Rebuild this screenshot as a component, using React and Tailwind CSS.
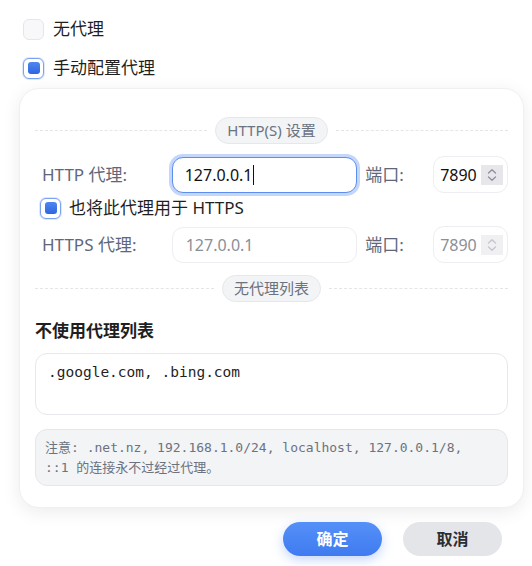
import React from 'react';

const Check = ({ checked }) => (
    <div className={`w-[21px] h-[21px] rounded-[6px] border flex items-center justify-center shrink-0 ${checked ? 'border-[#7aa2f2] bg-white shadow-[0_0_0_1px_rgba(122,162,242,0.25)]' : 'border-[#e4e6ea] bg-[#f8f8fa]'}`}>
        {checked && <div className="w-[12px] h-[12px] rounded-[3px] bg-gradient-to-b from-[#4d86f2] to-[#2f66df]"></div>}
    </div>
);

const Spinner = ({ disabled }) => (
    <div className={`w-[22px] h-[20px] flex flex-col items-center justify-center ${disabled ? 'bg-[#f0f0f3]' : 'bg-[#e6e6eb]'}`}>
        <svg width="10" height="14" viewBox="0 0 10 14" fill="none" stroke={disabled ? '#c4c6cc' : '#8e9199'} strokeWidth="1.3" strokeLinecap="round" strokeLinejoin="round">
            <path d="M1.5 5 L5 1.8 L8.5 5" />
            <path d="M1.5 9 L5 12.2 L8.5 9" />
        </svg>
    </div>
);

const Divider = ({ label }) => (
    <div className="flex items-center gap-[8px]">
        <div className="flex-1 border-t border-dashed border-[#e3e5e9]"></div>
        <div className="h-[27px] px-[11px] rounded-full bg-[#f3f4f6] border border-[#e5e7eb] flex items-center text-[15px] text-[#6b7280]">{label}</div>
        <div className="flex-1 border-t border-dashed border-[#e3e5e9]"></div>
    </div>
);

const ProxyRow = ({ label, disabled }) => (
    <div className="flex items-center">
        <span className="w-[137px] pl-[7px] text-[17px] text-[#60677a]">{label}</span>
        {disabled ? (
            <div className="w-[186px] h-[36px] rounded-[11px] border border-[#eceef1] bg-white flex items-center pl-[13px] text-[16px] text-[#8b8f97]">127.0.0.1</div>
        ) : (
            <div className="w-[186px] h-[36px] rounded-[11px] border-[1.5px] border-[#5c8ef2] shadow-[0_0_0_3px_#c5d6fb] bg-white flex items-center pl-[12px] text-[16px] text-[#111]">
                127.0.0.1<span className="w-px h-[20px] bg-[#111] ml-[1px]"></span>
            </div>
        )}
        <span className="ml-[8px] w-[68px] text-[17px] text-[#60677a]">端口:</span>
        <div className="w-[75px] h-[37px] rounded-[11px] border border-[#eceef1] bg-white flex items-center pl-[6px] gap-[4px]">
            <span className={`text-[16px] ${disabled ? 'text-[#8b8f97]' : 'text-[#111]'}`}>7890</span>
            <Spinner disabled={disabled} />
        </div>
    </div>
);

export default function App() {
    return (
        <div className="w-[532px] h-[566px] bg-white overflow-hidden font-['Noto_Sans','Noto_Sans_CJK_SC',sans-serif]">
            <div className="pl-[23px] pt-[18px] flex flex-col gap-[17px]">
                <div className="flex items-center gap-[9px]">
                    <Check />
                    <span className="text-[17px] text-[#1f1f1f] leading-[22px]">无代理</span>
                </div>
                <div className="flex items-center gap-[9px]">
                    <Check checked />
                    <span className="text-[17px] text-[#1f1f1f] leading-[22px]">手动配置代理</span>
                </div>
            </div>

            <div className="ml-[19px] mt-[9px] w-[505px] h-[420px] rounded-[20px] bg-white border border-[#eff0f2] shadow-[0_4px_18px_rgba(0,0,0,0.08)] px-[15px] pt-[28px]">
                <Divider label="HTTP(S) 设置" />
                <div className="mt-[12px]">
                    <ProxyRow label="HTTP 代理:" />
                </div>
                <div className="mt-[4px] pl-[5px] flex items-center gap-[8px]">
                    <Check checked />
                    <span className="text-[17px] text-[#1f1f1f] leading-[22px]">也将此代理用于 HTTPS</span>
                </div>
                <div className="mt-[7px]">
                    <ProxyRow label="HTTPS 代理:" disabled />
                </div>
                <div className="mt-[12px]">
                    <Divider label="无代理列表" />
                </div>
                <div className="mt-[17px] text-[17px] font-bold text-[#1f1f1f] leading-[24px]">不使用代理列表</div>
                <div className="mt-[10px] h-[62px] rounded-[12px] border border-[#e6e8ec] bg-white pl-[12px] pt-[8px] font-['DejaVu_Sans_Mono',monospace] text-[14.5px] text-[#1f1f1f]">
                    .google.com, .bing.com
                </div>
                <div className="mt-[14px] h-[57px] rounded-[12px] border border-[#e5e7eb] bg-[#f3f4f6] pl-[9px] pt-[8px] font-['DejaVu_Sans_Mono','Noto_Sans_CJK_SC',monospace] text-[13px] leading-[20px] text-[#6b7280]">
                    注意: .net.nz, 192.168.1.0/24, localhost, 127.0.0.1/8,<br />::1 的连接永不过经过代理。
                </div>
            </div>

            <div className="mt-[14px] pr-[30px] flex justify-end gap-[21px]">
                <button className="w-[99px] h-[34px] rounded-full bg-gradient-to-b from-[#5590f8] to-[#3f7bf0] text-white text-[16px] font-bold shadow-[0_4px_12px_rgba(66,124,240,0.3)]">确定</button>
                <button className="w-[99px] h-[34px] rounded-full bg-[#e3e5e9] text-[#2b2e33] text-[16px] font-bold">取消</button>
            </div>
        </div>
    );
}
